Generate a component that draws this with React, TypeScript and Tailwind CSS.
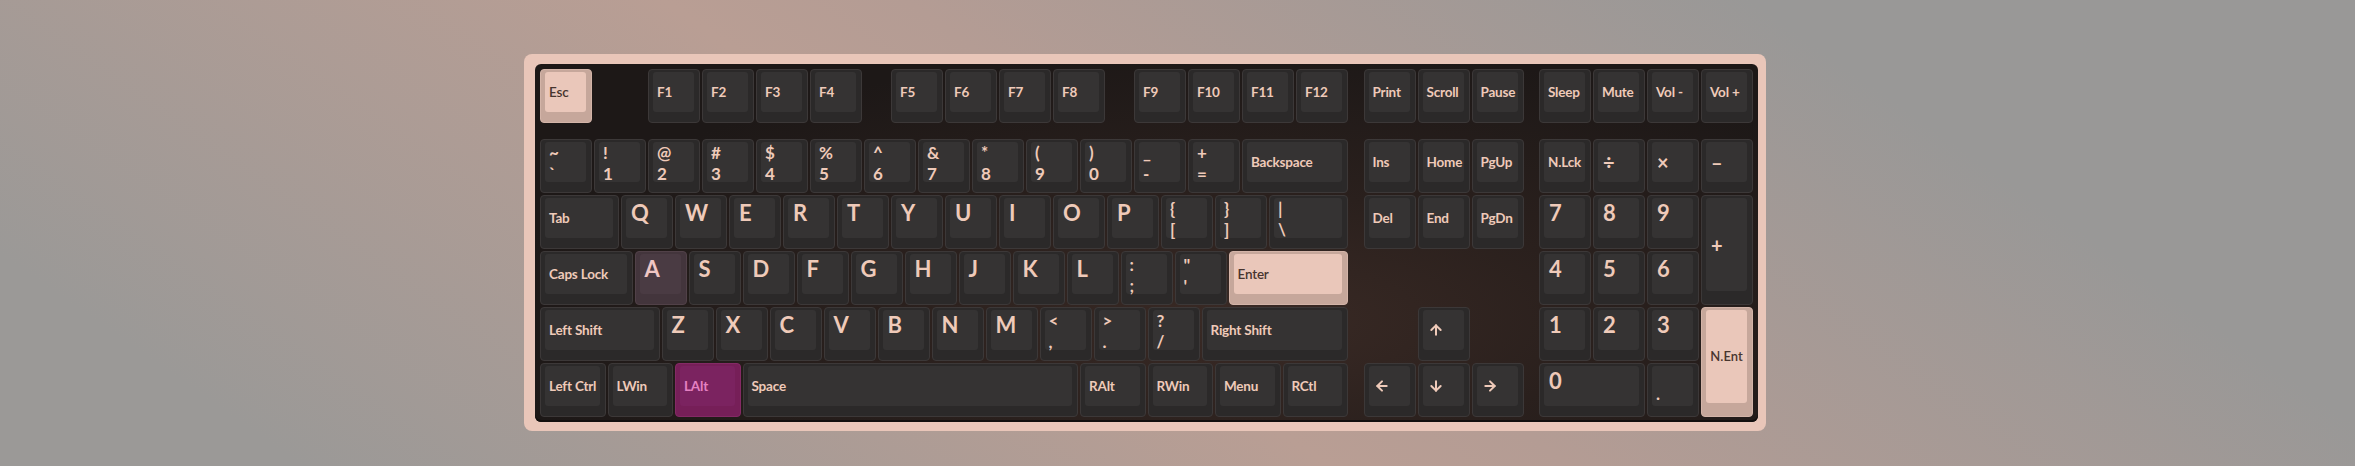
import { ArrowUp, ArrowDown, ArrowLeft, ArrowRight } from 'lucide-react';
import type { ReactNode } from 'react';

type Variant = 'dark' | 'peach' | 'plum' | 'magenta';
type Kind = 'mod' | 'alpha' | 'dual' | 'op' | 'center' | 'arrow';

const widths: { [key: string]: string } = {
  '1': 'w-[54px]',
  '1.25': 'w-[67.5px]',
  '1.5': 'w-[81px]',
  '1.75': 'w-[94.5px]',
  '2': 'w-[108px]',
  '2.25': 'w-[121.5px]',
  '2.75': 'w-[148.5px]',
  '6.25': 'w-[337.5px]',
  'grid': 'w-full',
};

const bodyColors: { [key: string]: string } = {
  dark: 'bg-[#2b2929] border-[#3c3838]',
  peach: 'bg-[#c6a79b] border-[#d3b4a8]',
  plum: 'bg-[#43353c] border-[#514148]',
  magenta: 'bg-[#761f58] border-[#842a65]',
};

const faceColors: { [key: string]: string } = {
  dark: 'bg-[#353333] text-[#efcab9]',
  peach: 'bg-[#eac7ba] text-[#47352f]',
  plum: 'bg-[#4a3b43] text-[#efc6c4]',
  magenta: 'bg-[#7b2360] text-[#e680c2]',
};

const kindClasses: { [key: string]: string } = {
  mod: 'flex items-center pl-[4px] text-[13.5px] font-bold tracking-[-0.2px]',
  alpha: 'pl-[5px] pt-[4px] text-[22px] font-bold leading-none',
  dual: 'flex flex-col pl-[4px] text-[17px] font-bold leading-[21px]',
  op: 'flex items-center pl-[5px] text-[20px] font-bold',
  center: 'flex items-center justify-center text-[13px] font-semibold',
  arrow: 'flex items-center pl-[5px]',
};

type KeyProps = {
  label?: ReactNode;
  sub?: string;
  w?: string;
  v?: Variant;
  k?: Kind;
  tall?: boolean;
  className?: string;
};

const Key = ({ label, sub, w = '1', v = 'dark', k = 'mod', tall = false, className = '' }: KeyProps) => {
  return (
    <div className={`${widths[w]} h-full shrink-0 p-px ${className}`}>
      <div
        className={`flex h-full rounded-[4px] border pl-[4px] pr-[5px] pt-[2px] ${tall ? 'pb-[13px]' : 'pb-[10px]'} ${bodyColors[v]}`}
      >
        <div className={`flex-1 rounded-[3px] ${faceColors[v]} ${kindClasses[k]} ${v === 'peach' ? 'font-semibold' : ''}`}>
          {k === 'dual' ? (
            <>
              <span className="h-[21px]">{label}</span>
              <span className="h-[21px]">{sub}</span>
            </>
          ) : (
            label
          )}
        </div>
      </div>
    </div>
  );
};

const Gap = ({ w }: { w: string }) => <div className={`${w} shrink-0`} />;

const Row = ({ children }: { children: ReactNode }) => <div className="flex h-[56px]">{children}</div>;

const arrow = 'h-[16px] w-[16px] stroke-[3]';

const App = () => {
  return (
    <div className="flex h-[466px] w-full items-start overflow-hidden bg-[linear-gradient(35deg,#9b9997_10%,#b99e94_44%,#b49c94_52%,#999897_80%)] pl-[524px] pt-[54px] font-[Lato,sans-serif]">
      <div className="rounded-[8px] bg-[#e9c6b9] pb-[9px] pl-[11px] pr-[8px] pt-[10px]">
        <div className="rounded-[6px] bg-[radial-gradient(ellipse_at_58%_72%,#3a2a25_0%,#2a201d_35%,#1d1817_75%)] p-[4px] shadow-[inset_0_-2px_0_#120e0d]">
          {/* function row */}
          <Row>
            <Key label="Esc" v="peach" />
            <Gap w="w-[54px]" />
            <Key label="F1" />
            <Key label="F2" />
            <Key label="F3" />
            <Key label="F4" />
            <Gap w="w-[27px]" />
            <Key label="F5" />
            <Key label="F6" />
            <Key label="F7" />
            <Key label="F8" />
            <Gap w="w-[27px]" />
            <Key label="F9" />
            <Key label="F10" />
            <Key label="F11" />
            <Key label="F12" />
            <Gap w="w-[13.5px]" />
            <Key label="Print" />
            <Key label="Scroll" />
            <Key label="Pause" />
            <Gap w="w-[13.5px]" />
            <Key label="Sleep" />
            <Key label="Mute" />
            <Key label="Vol -" />
            <Key label="Vol +" />
          </Row>

          <div className="mt-[14px] flex">
            {/* main block */}
            <div className="flex w-[810px] shrink-0 flex-col">
              <Row>
                <Key k="dual" label="~" sub="`" />
                <Key k="dual" label="!" sub="1" />
                <Key k="dual" label="@" sub="2" />
                <Key k="dual" label="#" sub="3" />
                <Key k="dual" label="$" sub="4" />
                <Key k="dual" label="%" sub="5" />
                <Key k="dual" label="^" sub="6" />
                <Key k="dual" label="&" sub="7" />
                <Key k="dual" label="*" sub="8" />
                <Key k="dual" label="(" sub="9" />
                <Key k="dual" label=")" sub="0" />
                <Key k="dual" label="_" sub="-" />
                <Key k="dual" label="+" sub="=" />
                <Key label="Backspace" w="2" />
              </Row>
              <Row>
                <Key label="Tab" w="1.5" />
                {['Q', 'W', 'E', 'R', 'T', 'Y', 'U', 'I', 'O', 'P'].map((l) => (
                  <Key key={l} k="alpha" label={l} />
                ))}
                <Key k="dual" label="{" sub="[" />
                <Key k="dual" label="}" sub="]" />
                <Key k="dual" label="|" sub="\" w="1.5" />
              </Row>
              <Row>
                <Key label="Caps Lock" w="1.75" />
                <Key k="alpha" label="A" v="plum" />
                {['S', 'D', 'F', 'G', 'H', 'J', 'K', 'L'].map((l) => (
                  <Key key={l} k="alpha" label={l} />
                ))}
                <Key k="dual" label=":" sub=";" />
                <Key k="dual" label={'"'} sub="'" />
                <Key label="Enter" w="2.25" v="peach" />
              </Row>
              <Row>
                <Key label="Left Shift" w="2.25" />
                {['Z', 'X', 'C', 'V', 'B', 'N', 'M'].map((l) => (
                  <Key key={l} k="alpha" label={l} />
                ))}
                <Key k="dual" label="<" sub="," />
                <Key k="dual" label=">" sub="." />
                <Key k="dual" label="?" sub="/" />
                <Key label="Right Shift" w="2.75" />
              </Row>
              <Row>
                <Key label="Left Ctrl" w="1.25" />
                <Key label="LWin" w="1.25" />
                <Key label="LAlt" w="1.25" v="magenta" />
                <Key label="Space" w="6.25" />
                <Key label="RAlt" w="1.25" />
                <Key label="RWin" w="1.25" />
                <Key label="Menu" w="1.25" />
                <Key label="RCtl" w="1.25" />
              </Row>
            </div>

            <Gap w="w-[13.5px]" />

            {/* navigation cluster */}
            <div className="grid w-[162px] shrink-0 grid-cols-[repeat(3,54px)] grid-rows-[repeat(5,56px)]">
              <Key w="grid" label="Ins" />
              <Key w="grid" label="Home" />
              <Key w="grid" label="PgUp" />
              <Key w="grid" label="Del" />
              <Key w="grid" label="End" />
              <Key w="grid" label="PgDn" />
              <div className="col-span-3" />
              <Key w="grid" k="arrow" label={<ArrowUp className={arrow} />} className="col-start-2" />
              <div />
              <Key w="grid" k="arrow" label={<ArrowLeft className={arrow} />} />
              <Key w="grid" k="arrow" label={<ArrowDown className={arrow} />} />
              <Key w="grid" k="arrow" label={<ArrowRight className={arrow} />} />
            </div>

            <Gap w="w-[13.5px]" />

            {/* numpad */}
            <div className="grid w-[216px] shrink-0 grid-cols-[repeat(4,54px)] grid-rows-[repeat(5,56px)]">
              <Key w="grid" label="N.Lck" />
              <Key w="grid" k="op" label="÷" />
              <Key w="grid" k="op" label="×" />
              <Key w="grid" k="op" label="–" />
              <Key w="grid" k="alpha" label="7" />
              <Key w="grid" k="alpha" label="8" />
              <Key w="grid" k="alpha" label="9" />
              <Key w="grid" k="op" label="+" tall className="row-span-2" />
              <Key w="grid" k="alpha" label="4" />
              <Key w="grid" k="alpha" label="5" />
              <Key w="grid" k="alpha" label="6" />
              <Key w="grid" k="alpha" label="1" />
              <Key w="grid" k="alpha" label="2" />
              <Key w="grid" k="alpha" label="3" />
              <Key w="grid" k="center" label="N.Ent" v="peach" tall className="row-span-2" />
              <Key w="grid" k="alpha" label="0" className="col-span-2" />
              <Key w="grid" k="dual" label="" sub="." className="[&_span:last-child]:-mt-[4px]" />
            </div>
          </div>
        </div>
      </div>
    </div>
  );
};

export default App;
